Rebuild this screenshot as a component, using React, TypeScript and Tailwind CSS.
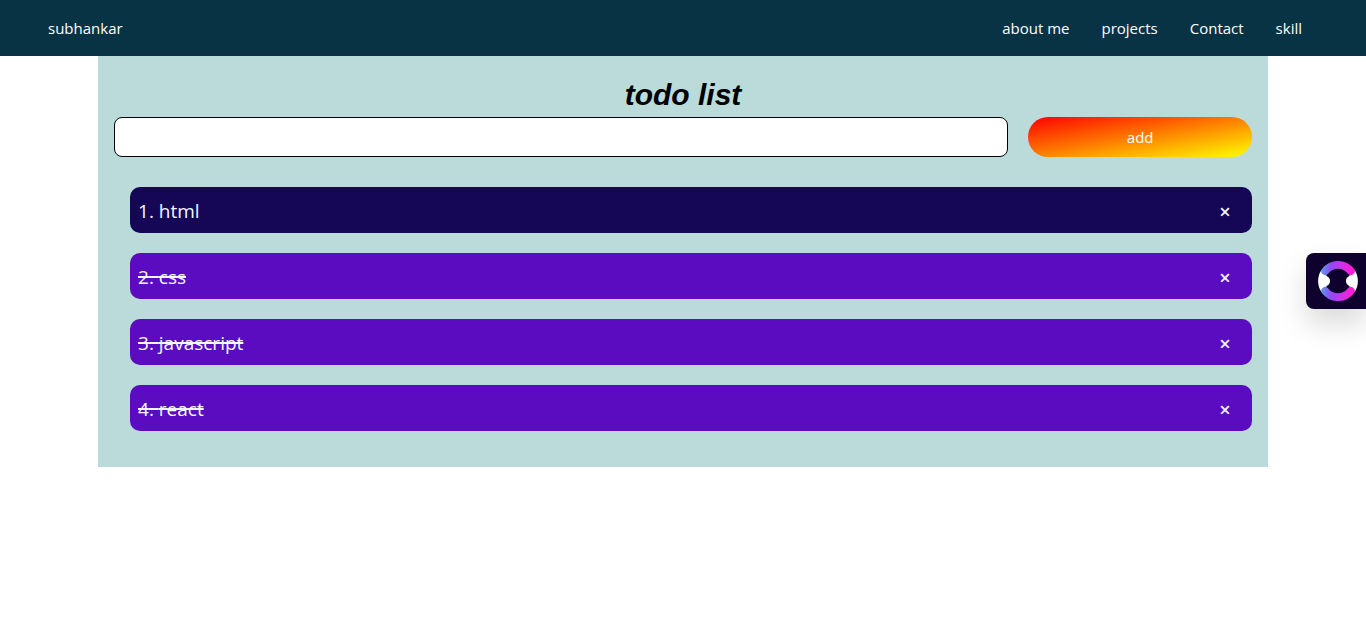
import { useState, type FormEvent } from "react";

type Todo = { id: number; text: string; done: boolean };

const links = ["about me", "projects", "Contact", "skill"];

const initialTodos: Todo[] = [
  { id: 1, text: "html", done: false },
  { id: 2, text: "css", done: true },
  { id: 3, text: "javascript", done: true },
  { id: 4, text: "react", done: true },
];

function Navbar() {
  return (
    <nav className="flex h-14 items-center justify-between bg-[#083344] pr-16 pl-12 text-[15px] text-white">
      <a href="#home">subhankar</a>
      <ul className="flex gap-8">
        {links.map((link) => (
          <li key={link}>
            <a href={"#" + link.replace(" ", "-")}>{link}</a>
          </li>
        ))}
      </ul>
    </nav>
  );
}

function RingLogo() {
  return (
    <svg viewBox="0 0 40 40" className="size-10" aria-hidden="true">
      <defs>
        <linearGradient id="ring" gradientUnits="userSpaceOnUse" x1="3" y1="20" x2="37" y2="20">
          <stop offset="0" stopColor="#5b9bec" />
          <stop offset="0.3" stopColor="#9248f6" />
          <stop offset="0.6" stopColor="#c935e8" />
          <stop offset="0.9" stopColor="#ff1cd6" />
        </linearGradient>
      </defs>
      <path
        d="M3.400 9A20 20 0 0 0 3.400 31L8 27C8 25.500 9 24.500 10.200 24C12.600 22.500 12.600 17.500 10.200 16C9 15.500 8 14.500 8 13ZM36.600 9A20 20 0 0 1 36.600 31L32 27C32 25.500 31 24.500 29.800 24C27.400 22.500 27.400 17.500 29.800 16C31 15.500 32 14.500 32 13Z"
        fill="#fff"
      />
      <path
        d="M7.200 10.200A16.100 16.100 0 0 1 32.800 10.200M7.200 29.800A16.100 16.100 0 0 0 32.800 29.800"
        fill="none"
        stroke="url(#ring)"
        strokeWidth="7.800"
        strokeLinecap="round"
      />
    </svg>
  );
}

export default function App() {
  const [todos, setTodos] = useState<Todo[]>(initialTodos);
  const [draft, setDraft] = useState("");

  const add = (event: FormEvent) => {
    event.preventDefault();
    const text = draft.trim();
    if (!text) return;
    setTodos([...todos, { id: Date.now(), text, done: false }]);
    setDraft("");
  };

  const toggle = (id: number) =>
    setTodos(todos.map((t) => (t.id === id ? { ...t, done: !t.done } : t)));

  const remove = (id: number) => setTodos(todos.filter((t) => t.id !== id));

  return (
    <div className="font-['Segoe_UI','Open_Sans',sans-serif]">
      <Navbar />
      <main className="mx-auto max-w-[1170px] bg-[#bbdbda] px-4 pt-4 pb-9">
        <h1 className="text-center font-['Liberation_Sans',Arial,sans-serif] text-3xl leading-[45px] font-bold text-black italic">
          todo list
        </h1>
        <form onSubmit={add} className="grid grid-cols-[4fr_1fr] gap-5">
          <input
            type="text"
            aria-label="New todo"
            value={draft}
            onChange={(e) => setDraft(e.target.value)}
            className="h-10 min-w-0 rounded-lg border border-black bg-white px-3"
          />
          <button
            type="submit"
            className="h-10 rounded-full bg-[linear-gradient(to_bottom_right,red,yellow)] text-[15px] text-white"
          >
            add
          </button>
        </form>
        <ul className="mt-[30px] flex flex-col gap-5 pl-4">
          {todos.map((todo, index) => (
            <li
              key={todo.id}
              className={
                "flex h-[46px] items-center justify-between rounded-[10px] pt-[3px] pr-[19px] pl-2 text-[#f0f8ff] " +
                (todo.done ? "bg-[#5b0bc0]" : "bg-[#150755]")
              }
            >
              <button
                type="button"
                onClick={() => toggle(todo.id)}
                className={"text-[19px] " + (todo.done ? "line-through decoration-2" : "")}
              >
                {index + 1}. {todo.text}
              </button>
              <button
                type="button"
                aria-label={"Remove " + todo.text}
                onClick={() => remove(todo.id)}
                className="flex size-4 items-center justify-center text-xl font-semibold"
              >
                ×
              </button>
            </li>
          ))}
        </ul>
      </main>
      <button
        type="button"
        aria-label="Open assistant"
        className="fixed top-[253px] right-0 flex h-14 w-[60px] items-center rounded-l-lg bg-[#0e012d] pl-3 shadow-[0_15px_30px_rgba(0,0,0,0.15)]"
      >
        <RingLogo />
      </button>
    </div>
  );
}
